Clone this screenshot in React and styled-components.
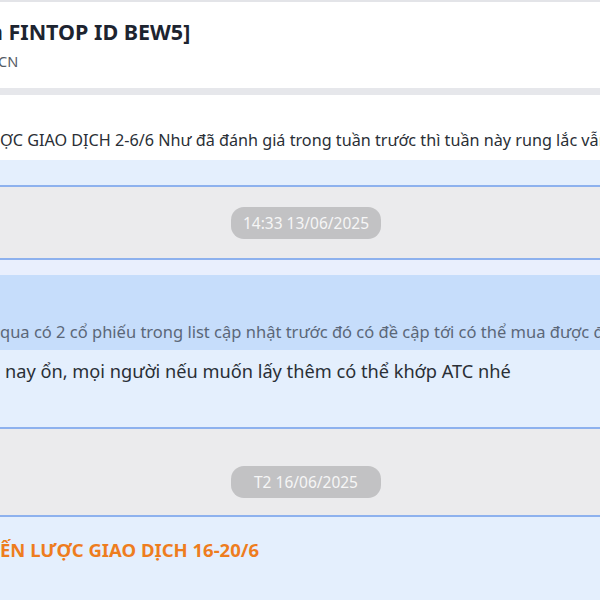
import React from 'react';
import styled, { createGlobalStyle } from 'styled-components';

const GlobalStyle = createGlobalStyle`
  html, body {
    margin: 0;
    padding: 0;
    background: #ebebed;
    font-family: "Noto Sans", "Open Sans", sans-serif;
    overflow: hidden;
  }
`;

const Screen = styled.div`
  width: 600px;
  height: 600px;
  overflow: hidden;
  display: flex;
  flex-direction: column;
  background: #ebebed;
`;

const Header = styled.header`
  height: 86px;
  flex-shrink: 0;
  background: #ffffff;
  border-top: 2px solid #e3e4e8;
  border-bottom: 7px solid #e6e7eb;
  display: flex;
  flex-direction: column;
  overflow: hidden;
`;

const Title = styled.h1`
  margin: 16px 0 0 -10px;
  font-size: 21.5px;
  font-weight: 700;
  line-height: 28px;
  color: #1d2430;
  white-space: nowrap;
`;

const Subtitle = styled.p`
  margin: 5px 0 0 -2px;
  font-size: 14.5px;
  line-height: 20px;
  color: #555b65;
  white-space: nowrap;
`;

const Bubble = styled.section`
  flex-shrink: 0;
  background: #e4effd;
  border-top: ${({ $top }) => ($top ? '2px solid #8db1ee' : 'none')};
  border-bottom: ${({ $bottom }) => ($bottom ? '2px solid #8db1ee' : 'none')};
  display: flex;
  flex-direction: column;
  overflow: hidden;
`;

const PlainPart = styled.div`
  background: #ffffff;
  height: 65px;
  display: flex;
  align-items: flex-end;
  padding-bottom: 9px;
  box-sizing: border-box;
`;

const Spacer = styled.div`
  height: ${({ $h }) => $h}px;
  background: ${({ $tint }) => $tint || 'transparent'};
`;

const Quote = styled.div`
  height: 75px;
  background: #c6ddfb;
  display: flex;
  align-items: flex-end;
  padding-bottom: 7px;
  box-sizing: border-box;
`;

const Line = styled.p`
  margin: 0;
  white-space: nowrap;
  font-size: ${({ $size }) => $size || 15}px;
  line-height: 22px;
  color: ${({ $muted }) => ($muted ? '#5b6778' : '#2a2f36')};
`;

const Body = styled.div`
  height: 77px;
  padding: 10px 0 0 5px;
  box-sizing: border-box;
`;

const Heading = styled.h2`
  margin: 0;
  padding: 21px 0 0 0;
  font-size: 18.5px;
  font-weight: 700;
  line-height: 24px;
  color: #ee7d1e;
  white-space: nowrap;
`;

const DateRow = styled.div`
  height: ${({ $h }) => $h}px;
  flex-shrink: 0;
  display: flex;
  align-items: center;
  justify-content: center;
  padding: ${({ $offset }) => $offset || 0}px 0 0 12px;
  box-sizing: border-box;
`;

const DatePill = styled.span`
  height: 32px;
  width: 150px;
  border-radius: 13px;
  background: #c2c2c4;
  color: #f6f6f6;
  font-size: 15.5px;
  display: flex;
  align-items: center;
  justify-content: center;
`;

const App = () => (
  <Screen>
    <GlobalStyle />
    <Header>
      <Title>a FINTOP ID BEW5]</Title>
      <Subtitle>CN</Subtitle>
    </Header>
    <Bubble $bottom>
      <PlainPart>
        <Line $size={16.2}>ỢC GIAO DỊCH 2-6/6 Như đã đánh giá trong tuần trước thì tuần này rung lắc vẫn tiếp diễn</Line>
      </PlainPart>
      <Spacer $h={25} />
    </Bubble>
    <DateRow $h={71}>
      <DatePill>14:33 13/06/2025</DatePill>
    </DateRow>
    <Bubble $top $bottom>
      <Spacer $h={15} $tint="#e9effd" />
      <Quote>
        <Line $muted $size={16.5}>qua có 2 cổ phiếu trong list cập nhật trước đó có đề cập tới có thể mua được để nắm giữ</Line>
      </Quote>
      <Body>
        <Line $size={18.2}>nay ổn, mọi người nếu muốn lấy thêm có thể khớp ATC nhé</Line>
      </Body>
    </Bubble>
    <DateRow $h={86} $offset={20}>
      <DatePill>T2 16/06/2025</DatePill>
    </DateRow>
    <Bubble $top>
      <Heading>ẾN LƯỢC GIAO DỊCH 16-20/6</Heading>
      <Spacer $h={60} />
    </Bubble>
  </Screen>
);

export default App;
